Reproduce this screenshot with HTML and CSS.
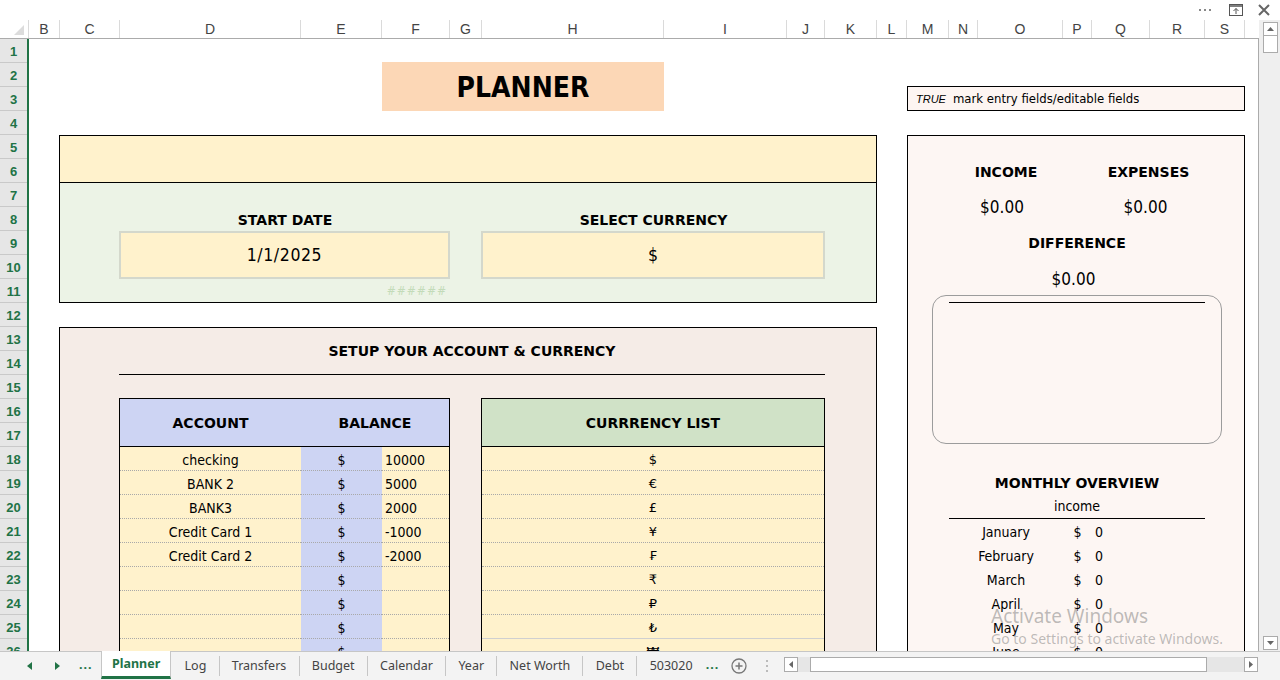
FILE: index.html
```html
<!DOCTYPE html>
<html lang="en">
<head>
    <meta charset="UTF-8">
    <title>Planner</title>
    <link rel="stylesheet" href="styles.css">
</head>
<body>
<div class="app">

    <div class="topbar">
        <span class="tb-dots"><i></i><i></i><i></i></span>
        <svg class="tb-icon" width="14" height="12" viewBox="0 0 14 12">
            <rect x="0.5" y="0.5" width="13" height="11" fill="none" stroke="#555"/>
            <line x1="0.5" y1="2" x2="13.5" y2="2" stroke="#555" stroke-width="1.5"/>
            <path d="M7 10V4.5M4.5 7L7 4.5 9.5 7" fill="none" stroke="#555"/>
        </svg>
        <svg class="tb-icon tb-close" width="12" height="12" viewBox="0 0 12 12">
            <path d="M1 1L11 11M11 1L1 11" stroke="#666" stroke-width="2"/>
        </svg>
    </div>

    <div class="middle">
        <div class="main">
            <div class="colhead">
                <div class="corner"><span></span></div>
                <div>B</div><div>C</div><div>D</div><div>E</div><div>F</div><div>G</div>
                <div>H</div><div>I</div><div>J</div><div>K</div><div>L</div><div>M</div>
                <div>N</div><div>O</div><div>P</div><div>Q</div><div>R</div><div>S</div>
            </div>

            <div class="body">
                <div class="rowhead">
                    <div>1</div><div>2</div><div>3</div><div>4</div><div>5</div><div>6</div>
                    <div>7</div><div>8</div><div>9</div><div>10</div><div>11</div><div>12</div>
                    <div>13</div><div>14</div><div>15</div><div>16</div><div>17</div><div>18</div>
                    <div>19</div><div>20</div><div>21</div><div>22</div><div>23</div><div>24</div>
                    <div>25</div><div>26</div>
                </div>

                <div class="sheet">
                    <!-- header -->
                    <div class="title">PLANNER</div>
                    <div class="legend"><i>TRUE</i><span>mark entry fields/editable fields</span></div>

                    <!-- start settings -->
                    <div class="band-top"></div>
                    <div class="band-mid"></div>
                    <div class="field-label lbl-date">START DATE</div>
                    <div class="field field-date">1/1/2025</div>
                    <div class="field-label lbl-cur">SELECT CURRENCY</div>
                    <div class="field field-cur">$</div>
                    <div class="hashes">######</div>

                    <!-- accounts -->
                    <div class="setup"></div>
                    <div class="setup-title">SETUP YOUR ACCOUNT &amp; CURRENCY</div>

                    <div class="accounts">
                        <div class="th">ACCOUNT</div>
                        <div class="th th-bal">BALANCE</div>

                        <div class="td name">checking</div><div class="td cur">$</div><div class="td bal">10000</div>
                        <div class="td name">BANK 2</div><div class="td cur">$</div><div class="td bal">5000</div>
                        <div class="td name">BANK3</div><div class="td cur">$</div><div class="td bal">2000</div>
                        <div class="td name">Credit Card 1</div><div class="td cur">$</div><div class="td bal">-1000</div>
                        <div class="td name">Credit Card 2</div><div class="td cur">$</div><div class="td bal">-2000</div>
                        <div class="td name"></div><div class="td cur">$</div><div class="td bal"></div>
                        <div class="td name"></div><div class="td cur">$</div><div class="td bal"></div>
                        <div class="td name"></div><div class="td cur">$</div><div class="td bal"></div>
                        <div class="td name"></div><div class="td cur">$</div><div class="td bal"></div>
                    </div>

                    <div class="currencies">
                        <div class="th">CURRRENCY LIST</div>
                        <div class="td">$</div>
                        <div class="td">€</div>
                        <div class="td">£</div>
                        <div class="td">¥</div>
                        <div class="td">₣</div>
                        <div class="td">₹</div>
                        <div class="td">₽</div>
                        <div class="td solid">₺</div>
                        <div class="td">₩</div>
                    </div>

                    <!-- summary -->
                    <div class="summary"></div>
                    <div class="sum-label sl-income">INCOME</div>
                    <div class="sum-label sl-expenses">EXPENSES</div>
                    <div class="sum-value sv-income">$0.00</div>
                    <div class="sum-value sv-expenses">$0.00</div>
                    <div class="sum-label sl-diff">DIFFERENCE</div>
                    <div class="sum-value sv-diff">$0.00</div>
                    <div class="chart-box"></div>

                    <div class="sum-label sl-monthly">MONTHLY OVERVIEW</div>
                    <div class="monthly-sub">income</div>

                    <div class="month m1">January</div><div class="msign m1">$</div><div class="mval m1">0</div>
                    <div class="month m2">February</div><div class="msign m2">$</div><div class="mval m2">0</div>
                    <div class="month m3">March</div><div class="msign m3">$</div><div class="mval m3">0</div>
                    <div class="month m4">April</div><div class="msign m4">$</div><div class="mval m4">0</div>
                    <div class="month m5">May</div><div class="msign m5">$</div><div class="mval m5">0</div>
                    <div class="month m6">June</div><div class="msign m6">$</div><div class="mval m6">0</div>
                </div>
            </div>
        </div>

        <div class="vscroll">
            <div class="vs-btn">
                <svg width="7" height="4" viewBox="0 0 7 4"><path d="M0 4L3.5 0 7 4z" fill="#666"/></svg>
            </div>
            <div class="vs-thumb"></div>
            <div class="vs-space"></div>
            <div class="vs-btn">
                <svg width="7" height="4" viewBox="0 0 7 4"><path d="M0 0L3.5 4 7 0z" fill="#666"/></svg>
            </div>
        </div>
    </div>

    <div class="tabbar">
        <div class="tab-nav">
            <svg width="5" height="8" viewBox="0 0 5 8"><path d="M5 0L0 4 5 8z" fill="#217346"/></svg>
            <svg width="5" height="8" viewBox="0 0 5 8"><path d="M0 0L5 4 0 8z" fill="#217346"/></svg>
            <span class="more">...</span>
        </div>
        <div class="tabs">
            <div class="tab active">Planner</div>
            <div class="tab">Log</div>
            <div class="tab">Transfers</div>
            <div class="tab">Budget</div>
            <div class="tab">Calendar</div>
            <div class="tab">Year</div>
            <div class="tab">Net Worth</div>
            <div class="tab">Debt</div>
            <div class="tab last">503020</div>
            <span class="more">...</span>
            <svg class="add" width="16" height="16" viewBox="0 0 16 16">
                <circle cx="8" cy="8" r="7" fill="none" stroke="#777" stroke-width="1.3"/>
                <path d="M8 4.5v7M4.5 8h7" stroke="#777" stroke-width="1.5"/>
            </svg>
            <span class="vdots"><i></i><i></i><i></i></span>
        </div>
        <div class="hscroll">
            <div class="hs-btn">
                <svg width="4" height="7" viewBox="0 0 4 7"><path d="M4 0L0 3.5 4 7z" fill="#666"/></svg>
            </div>
            <div class="hs-track"><div class="hs-thumb"></div></div>
            <div class="hs-btn">
                <svg width="4" height="7" viewBox="0 0 4 7"><path d="M0 0L4 3.5 0 7z" fill="#666"/></svg>
            </div>
        </div>
    </div>

    <div class="watermark">
        <p class="wm-big">Activate Windows</p>
        <p class="wm-small">Go to Settings to activate Windows.</p>
    </div>
</div>
</body>
</html>
```

FILE: styles.css
```css
* {
    box-sizing: border-box;
}
body {
    margin: 0;
    width: 1280px;
    height: 680px;
    overflow: hidden;
    font-family: "DejaVu Sans Condensed", "DejaVu Sans", sans-serif;
    font-size: 13px;
    color: #000;
    background: #fff;
}
.app {
    position: relative;
    display: flex;
    flex-direction: column;
    height: 680px;
}

/* window top strip */
.topbar {
    height: 20px;
    display: flex;
    justify-content: flex-end;
    align-items: center;
    padding-right: 10px;
}
.tb-dots {
    display: flex;
    gap: 3px;
    margin-right: 18px;
}
.tb-dots i {
    width: 2px;
    height: 2px;
    background: #888;
}
.tb-close {
    margin-left: 15px;
}

.middle {
    display: flex;
    height: 631px;
}
.main {
    width: 1259px;
    display: flex;
    flex-direction: column;
}

/* column letters */
.colhead {
    height: 19px;
    display: grid;
    grid-template-columns: 29px 31px 60px 181px 81px 68px 32px 182px 123px 38px 52px 30px 42px 29px 85px 29px 58px 55px 40px;
    border-bottom: 1px solid #ababab;
    font-family: "Liberation Sans", Arial, sans-serif;
    font-size: 14px;
    color: #444;
}
.colhead div {
    border-right: 1px solid #dadada;
    text-align: center;
    line-height: 18px;
}
.colhead .corner {
    position: relative;
}
.colhead .corner span {
    position: absolute;
    right: 4px;
    bottom: 3px;
    width: 0;
    height: 0;
    border-left: 10px solid transparent;
    border-bottom: 10px solid #dcdcdc;
}

.body {
    flex: 1;
    display: flex;
    overflow: hidden;
    border-right: 1px solid #ababab;
}
.rowhead {
    width: 29px;
    flex: none;
    background: #e6e6e6;
    border-right: 2px solid #217346;
}
.rowhead div {
    height: 24px;
    border-bottom: 1px solid #c9c9c9;
    text-align: center;
    line-height: 26px;
    overflow: hidden;
    font-family: "Liberation Sans", Arial, sans-serif;
    font-weight: bold;
    font-size: 13px;
    color: #217346;
}

/* the sheet itself */
.sheet {
    flex: 1;
    display: grid;
    grid-template-columns: 31px 60px 181px 81px 68px 32px 182px 123px 38px 52px 30px 42px 29px 85px 29px 58px 55px 40px;
    grid-template-rows: repeat(27, 24px);
}

.title {
    grid-column: 5 / 8;
    grid-row: 2 / 4;
    margin-top: -1px;
    background: #fcd7b6;
    display: flex;
    align-items: center;
    justify-content: center;
    font-weight: bold;
    font-size: 28px;
    padding-top: 2px;
}
.legend {
    grid-column: 12 / 19;
    grid-row: 3;
    margin-top: -1px;
    background: #fdf5f2;
    border: 1px solid #000;
    display: flex;
    align-items: center;
    gap: 7px;
    padding-left: 8px;
    font-size: 13px;
}
.legend i {
    font-family: "Liberation Sans", Arial, sans-serif;
    font-size: 11px;
}

.band-top {
    grid-column: 2 / 11;
    grid-row: 5 / 7;
    margin-left: -1px;
    background: #fff2cc;
    border: 1px solid #000;
}
.band-mid {
    grid-column: 2 / 11;
    grid-row: 7 / 12;
    margin-left: -1px;
    background: #ecf3e6;
    border: 1px solid #000;
    border-top: none;
}
.field-label,
.sum-label,
.setup-title,
.th {
    font-family: "DejaVu Sans", sans-serif;
    font-weight: bold;
    font-size: 14px;
}
.field-label {
    grid-row: 8;
    display: flex;
    align-items: center;
    justify-content: center;
    padding-top: 2px;
}
.lbl-date {
    grid-column: 3 / 6;
}
.lbl-cur {
    grid-column: 7 / 10;
}
.field {
    grid-row: 9 / 11;
    margin-left: -1px;
    background: #fff2cc;
    border: 2px solid #d4d8cc;
    display: flex;
    align-items: center;
    justify-content: center;
    font-size: 17.5px;
}
.field-date {
    grid-column: 3 / 6;
    letter-spacing: 0.6px;
}
.field-cur {
    grid-column: 7 / 10;
}
.hashes {
    grid-column: 5 / 6;
    grid-row: 11;
    text-align: right;
    padding-right: 3px;
    line-height: 24px;
    font-style: italic;
    font-size: 12px;
    letter-spacing: 1px;
    color: #c3dbb9;
}

.setup {
    grid-column: 2 / 11;
    grid-row: 13 / 28;
    margin-left: -1px;
    background: #f5ece7;
    border: 1px solid #000;
}
.setup-title {
    grid-column: 3 / 10;
    grid-row: 13 / 15;
    margin-left: -1px;
    border-bottom: 1px solid #000;
    display: flex;
    align-items: center;
    justify-content: center;
}

.accounts,
.currencies {
    grid-row: 16 / 28;
    margin-top: -1px;
    margin-left: -1px;
    border: 1px solid #000;
    display: grid;
    grid-template-rows: 48px;
    grid-auto-rows: 24px;
    align-content: start;
}
.accounts {
    grid-column: 3 / 6;
    grid-template-columns: 181px 81px 1fr;
}
.currencies {
    grid-column: 7 / 10;
    grid-template-columns: 1fr;
}
.th {
    display: flex;
    align-items: center;
    justify-content: center;
    border-bottom: 1px solid #000;
}
.accounts .th {
    background: #cdd4f3;
}
.accounts .th-bal {
    grid-column: 2 / 4;
}
.currencies .th {
    background: #d0e2c7;
}
.td {
    display: flex;
    align-items: center;
    justify-content: center;
    padding-top: 2px;
    background: #fff2cc;
    border-bottom: 1px dotted #a9a9a9;
    font-size: 14px;
}
.td.cur {
    background: #cdd4f3;
}
.td.bal {
    justify-content: flex-start;
    padding-left: 3px;
}
.td.solid {
    border-bottom: 1px solid #d0d0d0;
}
.currencies .td {
    font-family: "DejaVu Sans", sans-serif;
    font-size: 13px;
}

/* right hand summary */
.summary {
    grid-column: 12 / 19;
    grid-row: 5 / 28;
    background: #fdf6f3;
    border: 1px solid #000;
}
.sum-label {
    display: flex;
    align-items: center;
    justify-content: center;
}
.sum-value {
    display: flex;
    align-items: center;
    justify-content: center;
    font-size: 17px;
}
.sl-income,
.sv-income {
    grid-column: 13 / 15;
}
.sl-expenses,
.sv-expenses {
    grid-column: 16 / 18;
}
.sl-income,
.sl-expenses {
    grid-row: 6;
    padding-top: 2px;
}
.sv-income,
.sv-expenses {
    grid-row: 7 / 9;
    margin-top: -1px;
}
.sv-income {
    margin-right: 8px;
}
.sv-expenses {
    margin-right: 6px;
}
.sl-diff {
    grid-column: 13 / 18;
    grid-row: 9;
}
.sv-diff {
    grid-column: 13 / 18;
    grid-row: 10 / 12;
    padding-right: 7px;
    border-bottom: 1px solid #000;
}
.chart-box {
    grid-column: 12 / 19;
    grid-row: 11 / 18;
    margin: 16px 23px 3px 25px;
    border: 1px solid #9c9c9c;
    border-radius: 14px;
}
.sl-monthly {
    grid-column: 13 / 18;
    grid-row: 19;
}
.monthly-sub {
    grid-column: 13 / 18;
    grid-row: 20;
    border-bottom: 1px solid #000;
    text-align: center;
    line-height: 22px;
    font-size: 14px;
}
.month,
.msign,
.mval {
    line-height: 26px;
    font-size: 14px;
}
.month {
    grid-column: 13 / 15;
    text-align: center;
}
.msign {
    grid-column: 15 / 16;
    text-align: center;
}
.mval {
    grid-column: 16 / 17;
    padding-left: 3px;
}
.m1 { grid-row: 21; }
.m2 { grid-row: 22; }
.m3 { grid-row: 23; }
.m4 { grid-row: 24; }
.m5 { grid-row: 25; }
.m6 { grid-row: 26; }

/* vertical scroll bar */
.vscroll {
    width: 21px;
    background: #efefef;
    display: flex;
    flex-direction: column;
    align-items: center;
    padding: 2px 0 1px 2px;
}
.vs-btn {
    width: 15px;
    height: 14px;
    background: #fff;
    border: 1px solid #ababab;
    display: flex;
    align-items: center;
    justify-content: center;
}
.vs-thumb {
    width: 15px;
    height: 17px;
    background: #fff;
    border: 1px solid #ababab;
    border-top: none;
}
.vs-space {
    flex: 1;
}

/* sheet tabs */
.tabbar {
    height: 29px;
    display: flex;
    background: #f3f3f3;
    border-top: 1px solid #c6c6c6;
    font-family: "Noto Sans", "Open Sans", sans-serif;
    font-size: 12.5px;
    color: #444;
}
.tab-nav {
    width: 101px;
    flex: none;
    display: flex;
    align-items: center;
    padding-left: 27px;
    gap: 23px;
}
.more {
    color: #217346;
    font-weight: bold;
    letter-spacing: 1px;
    margin-top: -4px;
}
.tab-nav .more {
    margin-left: -4px;
}
.tabs {
    display: flex;
    align-items: center;
    flex: none;
}
.tab {
    height: 20px;
    line-height: 20px;
    padding: 0 12.25px;
    border-left: 1px solid #c6c6c6;
}
.tab.active {
    height: 28px;
    line-height: 25px;
    margin-top: -2px;
    padding: 0 10px;
    background: #fff;
    border-left: 1px solid #c6c6c6;
    border-right: 1px solid #c6c6c6;
    border-bottom: 3px solid #217346;
    font-weight: bold;
    color: #217346;
}
.tab.active + .tab {
    border-left-color: transparent;
}
.tabs .more {
    margin-left: 1px;
}
.add {
    margin-left: 12px;
}
.vdots {
    display: flex;
    flex-direction: column;
    gap: 3px;
    margin-left: 19px;
}
.vdots i {
    width: 2px;
    height: 2px;
    background: #bbb;
}
.hscroll {
    flex: 1;
    margin-left: 16px;
    margin-right: 22px;
    height: 15px;
    margin-top: 5px;
    display: flex;
}
.hs-btn {
    width: 14px;
    height: 15px;
    background: #fff;
    border: 1px solid #ababab;
    display: flex;
    align-items: center;
    justify-content: center;
}
.hs-track {
    flex: 1;
    background: #e6e6e6;
    padding-left: 12px;
    padding-right: 37px;
}
.hs-thumb {
    height: 15px;
    background: #fff;
    border: 1px solid #ababab;
}

/* activation watermark */
.watermark {
    position: absolute;
    left: 991px;
    top: 603px;
    font-family: "Noto Sans", "Open Sans", sans-serif;
    color: rgba(110, 110, 110, 0.45);
}
.watermark p {
    margin: 0;
}
.wm-big {
    font-size: 19px;
    line-height: 26px;
}
.wm-small {
    font-size: 14px;
    line-height: 20px;
}
```
